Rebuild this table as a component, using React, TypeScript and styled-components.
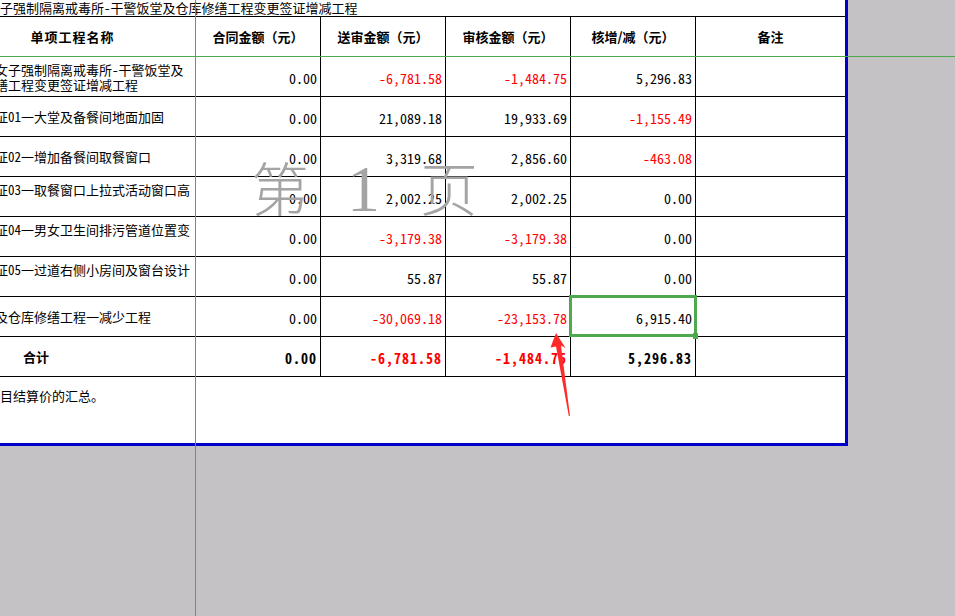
import React from "react";
import styled, { createGlobalStyle } from "styled-components";

const GREEN = "#4ea84e";
const BLUE = "#0000c8";

const GlobalStyle = createGlobalStyle`
  html, body { margin: 0; padding: 0; background: #c4c2c5; overflow: hidden; }
  body { font-family: "Noto Sans CJK SC", sans-serif; color: #000; }
`;

const Screen = styled.div`
  position: relative;
  width: 955px;
  height: 616px;
  overflow: hidden;
  background: #c4c2c5;
`;

const Sheet = styled.div`
  width: 845px;
  height: 443px;
  background: #fff;
  border-right: 3px solid ${BLUE};
  border-bottom: 3px solid ${BLUE};
  overflow: hidden;
  display: flex;
  flex-direction: column;
`;

const Title = styled.div`
  height: 16px;
  font-size: 13px;
  line-height: 16px;
  white-space: nowrap;
  font-feature-settings: "hwid" 1;
`;

const Grid = styled.div`
  margin-left: -50px;
  display: grid;
  grid-template-columns: 246px 125px 125px 125px 125px 149px;
  grid-auto-rows: 40px;
  border-top: 1px solid #000;
`;

const Cell = styled.div<{ $last?: boolean }>`
  box-sizing: border-box;
  border-bottom: 1px solid #000;
  border-right: ${(p) => (p.$last ? "none" : "1px solid #000")};
  display: flex;
  align-items: center;
  overflow: hidden;
  white-space: nowrap;
  font-feature-settings: "hwid" 1;
`;

const HeaderCell = styled(Cell)<{ $spaced?: boolean }>`
  justify-content: center;
  font-size: 13px;
  font-weight: 700;
  font-feature-settings: normal;
  letter-spacing: ${(p) => (p.$spaced ? "1px" : "0")};
`;

const NameCell = styled(Cell)<{ $top?: boolean }>`
  align-items: ${(p) => (p.$top ? "flex-start" : "center")};
  padding-left: 6px;
  padding-top: ${(p) => (p.$top ? "5px" : "0")};
  font-size: 13px;
  line-height: 15px;
`;

const TotalLabel = styled(Cell)`
  padding-left: 73px;
  font-size: 13px;
  font-weight: 700;
`;

const AmountCell = styled(Cell)<{ $neg?: boolean; $bold?: boolean }>`
  justify-content: flex-end;
  padding-right: 3px;
  padding-top: 2px;
  font-size: 14px;
  font-weight: ${(p) => (p.$bold ? 700 : 400)};
  letter-spacing: ${(p) => (p.$bold ? "1px" : "0")};
  color: ${(p) => (p.$neg ? "#ff0000" : "#000")};
`;

const EmptyCell = styled(Cell)``;

const Footer = styled.div`
  flex: 1;
  padding-top: 11px;
  font-size: 13px;
  line-height: 15px;
  white-space: nowrap;
  text-indent: -39px;
`;

const PageBreakV = styled.div`
  position: absolute;
  left: 195px;
  top: 0;
  width: 1px;
  height: 616px;
  background: ${GREEN};
`;

const PageBreakH = styled.div`
  position: absolute;
  left: 0;
  top: 56px;
  width: 955px;
  height: 1px;
  background: ${GREEN};
`;

const Selection = styled.div`
  position: absolute;
  left: 569px;
  top: 295px;
  width: 128px;
  height: 42px;
  box-sizing: border-box;
  border: 3px solid ${GREEN};
`;

const Handle = styled.div`
  position: absolute;
  left: 121px;
  top: 35px;
  width: 5px;
  height: 6px;
  background: ${GREEN};
`;

const Watermark = styled.div`
  position: absolute;
  left: 251px;
  top: 156px;
  display: flex;
  align-items: baseline;
  font-size: 58px;
  line-height: 1;
  color: #a4a4a4;
  font-weight: 300;
  pointer-events: none;
`;

const WmChar = styled.span<{ $gap: number; $serif?: boolean }>`
  margin-left: ${(p) => p.$gap}px;
  font-family: ${(p) => (p.$serif ? '"Liberation Serif", serif' : '"Noto Sans CJK SC", sans-serif')};
  font-size: ${(p) => (p.$serif ? "66px" : "58px")};
`;

const ArrowLayer = styled.svg`
  position: absolute;
  left: 0;
  top: 0;
  pointer-events: none;
`;

type Row = {
  name: React.ReactNode;
  top?: boolean;
  values: [string, string, string, string];
};

const rows: Row[] = [
  {
    name: (
      <span>
        广州市女子强制隔离戒毒所-干警饭堂及
        <br />
        仓库修缮工程变更签证增减工程
      </span>
    ),
    values: ["0.00", "-6,781.58", "-1,484.75", "5,296.83"],
  },
  { name: "变更签证01一大堂及备餐间地面加固", values: ["0.00", "21,089.18", "19,933.69", "-1,155.49"] },
  { name: "变更签证02一增加备餐间取餐窗口", values: ["0.00", "3,319.68", "2,856.60", "-463.08"] },
  { name: "变更签证03一取餐窗口上拉式活动窗口高", top: true, values: ["0.00", "2,002.25", "2,002.25", "0.00"] },
  { name: "变更签证04一男女卫生间排污管道位置变", top: true, values: ["0.00", "-3,179.38", "-3,179.38", "0.00"] },
  { name: "变更签证05一过道右侧小房间及窗台设计", top: true, values: ["0.00", "55.87", "55.87", "0.00"] },
  { name: "警饭堂及仓库修缮工程一减少工程", values: ["0.00", "-30,069.18", "-23,153.78", "6,915.40"] },
];

const totals = ["0.00", "-6,781.58", "-1,484.75", "5,296.83"];

const headers = ["合同金额（元）", "送审金额（元）", "审核金额（元）", "核增/减（元）"];

export default function App() {
  return (
    <Screen>
      <GlobalStyle />
      <Sheet>
        <Title>子强制隔离戒毒所-干警饭堂及仓库修缮工程变更签证增减工程</Title>
        <Grid>
          <HeaderCell $spaced>单项工程名称</HeaderCell>
          {headers.map((h) => (
            <HeaderCell key={h}>{h}</HeaderCell>
          ))}
          <HeaderCell $last>备注</HeaderCell>

          {rows.map((r, i) => (
            <React.Fragment key={i}>
              <NameCell $top={r.top}>{r.name}</NameCell>
              {r.values.map((v, j) => (
                <AmountCell key={j} $neg={v.startsWith("-")}>
                  {v}
                </AmountCell>
              ))}
              <EmptyCell $last />
            </React.Fragment>
          ))}

          <TotalLabel>合计</TotalLabel>
          {totals.map((v, j) => (
            <AmountCell key={j} $bold $neg={v.startsWith("-")}>
              {v}
            </AmountCell>
          ))}
          <EmptyCell $last />
        </Grid>
        <Footer>各单项目结算价的汇总。</Footer>
      </Sheet>

      <Watermark>
        <WmChar $gap={0}>第</WmChar>
        <WmChar $gap={38} $serif>1</WmChar>
        <WmChar $gap={40}>页</WmChar>
      </Watermark>

      <PageBreakV />
      <PageBreakH />

      <Selection>
        <Handle />
      </Selection>

      <ArrowLayer width={955} height={616} viewBox="0 0 955 616">
        <path
          d="M556 333 L565.5 348 L561 345.5 L570 416 L568.8 416 L556 346.5 L550.5 347.5 Z"
          fill="#ff2b2b"
        />
      </ArrowLayer>
    </Screen>
  );
}
